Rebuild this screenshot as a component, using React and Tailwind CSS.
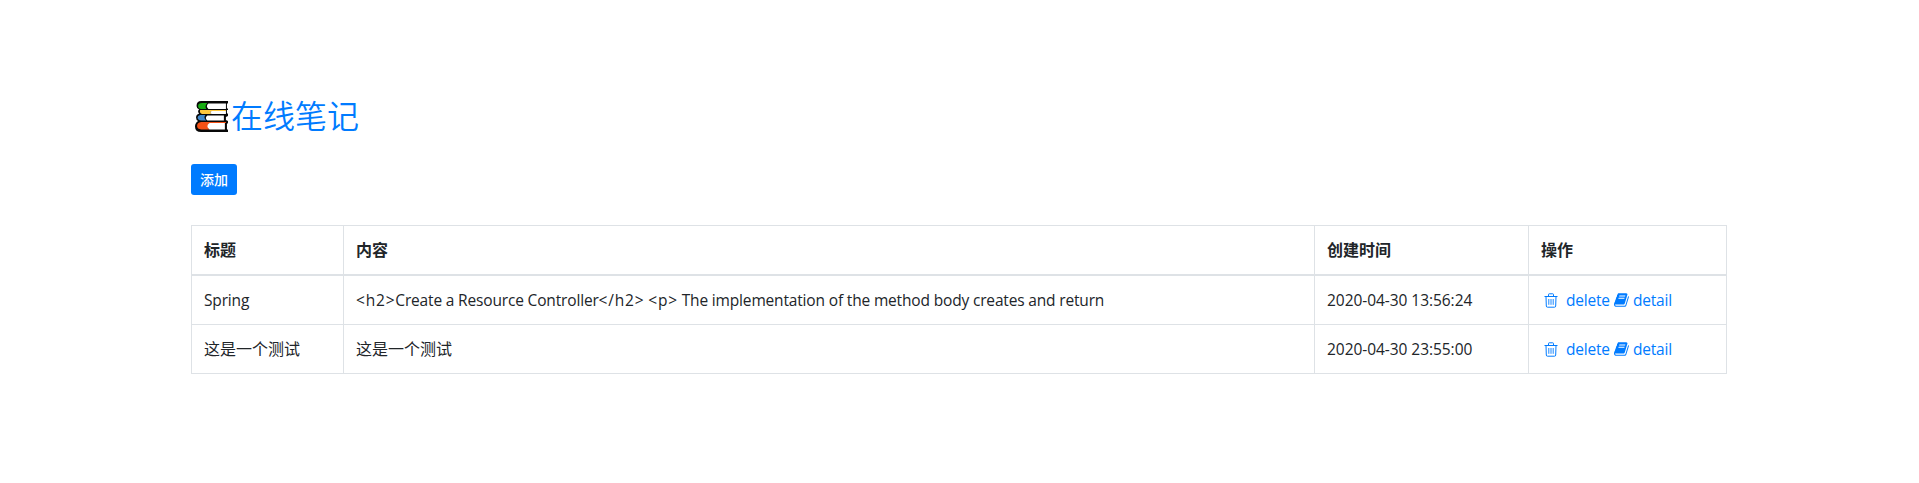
const notes = [
  {
    title: 'Spring',
    content: '<h2>Create a Resource Controller</h2> <p> The implementation of the method body creates and return',
    created: '2020-04-30 13:56:24',
  },
  { title: '这是一个测试', content: '这是一个测试', created: '2020-04-30 23:55:00' },
];

function BooksLogo() {
  return (
    <svg className="h-8 w-[34px] shrink-0" viewBox="0 0 33 32" preserveAspectRatio="none">
      <path d="M6 0H32V2L31 3V7L32 8V9H31V12L32 13V15L30 16V19L32 20V22L31 23V28L32 29V31H6Q0 31 0 25.500Q0 22 3 20Q1 19 1 16.500Q1 13.500 4 12.500Q3 11.500 3 10.500Q3 9 4 8.500Q1.500 7.500 1.500 5Q1.500 0 6 0Z" fill="#080808" />
      <path d="M7 2H12Q9 5 11 8H6Q3 7.500 3 5Q3 2 7 2Z" fill="#18ad13" />
      <path d="M13 2.500H30V8H13Q10 5 13 2.500Z" fill="#fff" />
      <path d="M5 9H30V10H16Q14 11.500 16 13H7Q4 12 5 9Z" fill="#ffc83d" />
      <path d="M16 10H30V13H16Q14 11.500 16 10Z" fill="#fff" />
      <path d="M5 14H10Q8 17 11 19.500H6Q2.500 19 2.500 16.500Q2.500 14.500 5 14Z" fill="#4289ca" />
      <path d="M12 14.500H28V19.500H12Q9 17 12 14.500Z" fill="#fff" />
      <path d="M6 21H30V22H14Q11 25 14 28.500H6Q2 28 2 25Q2 21.500 6 21Z" fill="#f45116" />
      <path d="M14 22H29V28.500H14Q10 25 14 22Z" fill="#fff" />
    </svg>
  );
}

function TrashIcon() {
  return (
    <svg className="ml-[3px] h-[15px] w-[14px] shrink-0" viewBox="0 0 14 15" fill="none" stroke="currentColor">
      <path d="M.5 3.500H13.500M4.500 3.500V1.500Q4.500 .8 5.200 .8H8.800Q9.500 .8 9.500 1.500V3.500M2 3.500L2.300 13Q2.300 14.200 3.500 14.200H10.500Q11.700 14.200 11.700 13L12 3.500" />
      <path d="M4.800 6V11.800M7 6V11.800M9.200 6V11.800" strokeWidth=".9" />
    </svg>
  );
}

function BookIcon() {
  return (
    <svg className="ml-[5px] h-4 w-4 shrink-0" viewBox="0 0 1792 1792" fill="currentColor">
      <path d="M1639 478q40 57 18 129l-275 906q-19 64-76.500 107.500t-122.500 43.500h-923q-77 0-148.500-53.500t-99.500-131.500q-24-67-2-127 0-4 3-27t4-37q1-8-3-21.500t-3-19.500q2-11 8-21t16.500-23.500 16.500-23.500q23-38 45-91.500t30-91.500q3-10 .5-30t-.5-28q3-11 17-28t17-23q21-36 42-92t25-90q1-9-2.500-32t.5-28q4-13 22-30.500t22-22.500q19-26 42.500-84.500t27.500-96.500q1-8-3-25.500t-2-26.500q2-8 9-18t18-23 17-21q8-12 16.500-30.500t15-35 16-36 19.500-32 26.500-23.500 36-11.500 47.500 5.500l-1 3q38-9 51-9h761q74 0 114 56t18 130l-274 906q-36 119-71.500 153.500t-128.500 34.500h-869q-27 0-38 15-11 16-1 43 24 70 144 70h923q29 0 56-15.500t35-41.500l300-987q7-22 5-57 38 15 59 43zm-1064 2q-4 13 2 22.500t20 9.500h608q13 0 25.500-9.500t16.500-22.500l21-64q4-13-2-22.500t-20-9.500h-608q-13 0-25.500 9.500t-16.500 22.500zm-83 256q-4 13 2 22.500t20 9.500h608q13 0 25.500-9.500t16.500-22.500l21-64q4-13-2-22.500t-20-9.500h-608q-13 0-25.500 9.500t-16.500 22.500z" />
    </svg>
  );
}

// Latin prose is set slightly tighter than markup tags; CJK keeps the full 16px size.
function NoteText({ text }) {
  if (!/^[\x20-\x7e]*$/.test(text)) return text;
  return text.split(/(<[^>]+>)/).filter(Boolean).map((part, i) => (
    <span key={i} className={part.startsWith('<') ? 'text-[15.5px] tracking-[0.8px]' : 'text-[15.5px] tracking-[-0.165px]'}>
      {part}
    </span>
  ));
}

export default function App() {
  return (
    <div className="h-[483px] bg-white pt-[97px] pl-[191px] font-['Open_Sans','Noto_Sans_CJK_SC',sans-serif] text-base text-[#212529]">
      <h1 className="flex h-[38px] items-start pl-[4px] text-[32px] leading-[34px] font-[350] text-[#007bff]">
        <span className="pt-[4px]"><BooksLogo /></span>
        <a href="#" className="ml-[2px] font-['Noto_Sans_CJK_SC',sans-serif]">在线笔记</a>
      </h1>
      <button className="mt-[29px] flex h-[31px] w-[46px] items-center justify-center rounded-[3px] bg-[#007bff] text-sm font-medium text-white">添加</button>
      <table className="mt-[30px] w-[1536px] table-fixed border-separate border-spacing-0 border-t border-l border-[#dee2e6] text-left">
        <colgroup>
          <col className="w-[152px]" />
          <col className="w-[971px]" />
          <col className="w-[214px]" />
          <col className="w-[198px]" />
        </colgroup>
        <thead>
          <tr className="h-[50px] [&>th]:border-r [&>th]:border-b-2 [&>th]:border-[#dee2e6] [&>th]:px-3 [&>th]:py-0 [&>th]:font-bold">
            <th>标题</th>
            <th>内容</th>
            <th>创建时间</th>
            <th>操作</th>
          </tr>
        </thead>
        <tbody>
          {notes.map((note) => (
            <tr key={note.created} className="h-[49px] [&>td]:border-r [&>td]:border-b [&>td]:border-[#dee2e6] [&>td]:px-3 [&>td]:py-0 [&>td]:whitespace-nowrap">
              <td><NoteText text={note.title} /></td>
              <td><NoteText text={note.content} /></td>
              <td>
                <div className="pt-0.5 text-[15.5px] tracking-[-0.05px]">{note.created}</div>
              </td>
              <td>
                <div className="flex items-center text-[15.5px] tracking-[-0.2px] text-[#007bff]">
                  <TrashIcon />
                  <a href="#" className="ml-[8px] w-[43px] pt-0.5">delete</a>
                  <BookIcon />
                  <a href="#" className="ml-[3px] pt-0.5">detail</a>
                </div>
              </td>
            </tr>
          ))}
        </tbody>
      </table>
    </div>
  );
}
